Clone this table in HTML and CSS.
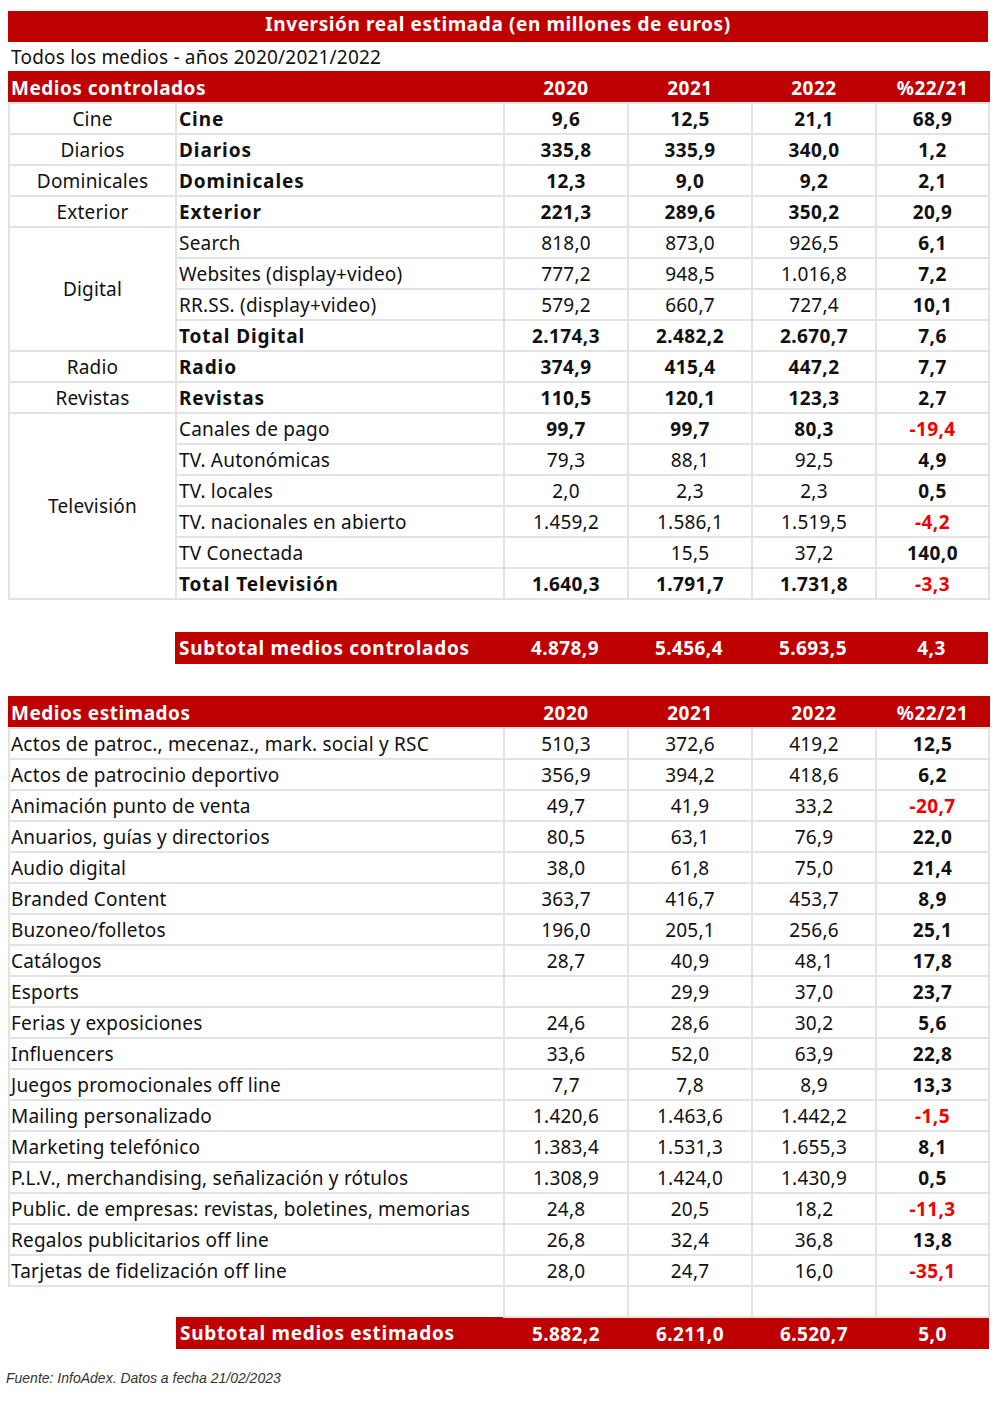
FILE: index.html
```html
<!DOCTYPE html>
<html lang="es">
<head>
<meta charset="utf-8">
<title>Inversión real estimada</title>
<link rel="stylesheet" href="styles.css">
</head>
<body>
<div class="page">
  <div class="title">Inversión real estimada (en millones de euros)</div>
  <div class="subtitle">Todos los medios - años 2020/2021/2022</div>

  <table class="grid">
    <colgroup><col class="c1"><col class="c2"><col class="c3"><col class="c4"><col class="c5"><col class="c6"></colgroup>
    <tr class="head"><th colspan="2" class="lh">Medios controlados</th><th>2020</th><th>2021</th><th>2022</th><th>%22/21</th></tr>
    <tr class="b"><td class="cat">Cine</td><td class="lbl">Cine</td><td>9,6</td><td>12,5</td><td>21,1</td><td>68,9</td></tr>
    <tr class="b"><td class="cat">Diarios</td><td class="lbl">Diarios</td><td>335,8</td><td>335,9</td><td>340,0</td><td>1,2</td></tr>
    <tr class="b"><td class="cat">Dominicales</td><td class="lbl">Dominicales</td><td>12,3</td><td>9,0</td><td>9,2</td><td>2,1</td></tr>
    <tr class="b"><td class="cat">Exterior</td><td class="lbl">Exterior</td><td>221,3</td><td>289,6</td><td>350,2</td><td>20,9</td></tr>
    <tr><td class="cat" rowspan="4">Digital</td><td class="lbl">Search</td><td>818,0</td><td>873,0</td><td>926,5</td><td class="p">6,1</td></tr>
    <tr><td class="lbl">Websites (display+video)</td><td>777,2</td><td>948,5</td><td>1.016,8</td><td class="p">7,2</td></tr>
    <tr><td class="lbl">RR.SS. (display+video)</td><td>579,2</td><td>660,7</td><td>727,4</td><td class="p">10,1</td></tr>
    <tr class="b"><td class="lbl">Total Digital</td><td>2.174,3</td><td>2.482,2</td><td>2.670,7</td><td>7,6</td></tr>
    <tr class="b"><td class="cat">Radio</td><td class="lbl">Radio</td><td>374,9</td><td>415,4</td><td>447,2</td><td>7,7</td></tr>
    <tr class="b"><td class="cat">Revistas</td><td class="lbl">Revistas</td><td>110,5</td><td>120,1</td><td>123,3</td><td>2,7</td></tr>
    <tr class="b"><td class="cat" rowspan="6">Televisión</td><td class="lbl n">Canales de pago</td><td>99,7</td><td>99,7</td><td>80,3</td><td class="neg">-19,4</td></tr>
    <tr><td class="lbl">TV. Autonómicas</td><td>79,3</td><td>88,1</td><td>92,5</td><td class="p">4,9</td></tr>
    <tr><td class="lbl">TV. locales</td><td>2,0</td><td>2,3</td><td>2,3</td><td class="p">0,5</td></tr>
    <tr><td class="lbl">TV. nacionales en abierto</td><td>1.459,2</td><td>1.586,1</td><td>1.519,5</td><td class="p neg">-4,2</td></tr>
    <tr><td class="lbl">TV Conectada</td><td></td><td>15,5</td><td>37,2</td><td class="p">140,0</td></tr>
    <tr class="b"><td class="lbl">Total Televisión</td><td>1.640,3</td><td>1.791,7</td><td>1.731,8</td><td class="neg">-3,3</td></tr>
  </table>

  <table class="grid sub-table">
    <colgroup><col class="c1"><col class="c2"><col class="c3"><col class="c4"><col class="c5"><col class="c6"></colgroup>
    <tr class="subtotal"><td class="blank"></td><td class="lbl">Subtotal medios controlados</td><td>4.878,9</td><td>5.456,4</td><td>5.693,5</td><td>4,3</td></tr>
  </table>

  <table class="grid est">
    <colgroup><col class="c1"><col class="c2"><col class="c3"><col class="c4"><col class="c5"><col class="c6"></colgroup>
    <tr class="head"><th colspan="2" class="lh">Medios estimados</th><th>2020</th><th>2021</th><th>2022</th><th>%22/21</th></tr>
    <tr><td colspan="2" class="lbl wide">Actos de patroc., mecenaz., mark. social y RSC</td><td>510,3</td><td>372,6</td><td>419,2</td><td class="p">12,5</td></tr>
    <tr><td colspan="2" class="lbl wide">Actos de patrocinio deportivo</td><td>356,9</td><td>394,2</td><td>418,6</td><td class="p">6,2</td></tr>
    <tr><td colspan="2" class="lbl wide">Animación punto de venta</td><td>49,7</td><td>41,9</td><td>33,2</td><td class="p neg">-20,7</td></tr>
    <tr><td colspan="2" class="lbl wide">Anuarios, guías y directorios</td><td>80,5</td><td>63,1</td><td>76,9</td><td class="p">22,0</td></tr>
    <tr><td colspan="2" class="lbl wide">Audio digital</td><td>38,0</td><td>61,8</td><td>75,0</td><td class="p">21,4</td></tr>
    <tr><td colspan="2" class="lbl wide">Branded Content</td><td>363,7</td><td>416,7</td><td>453,7</td><td class="p">8,9</td></tr>
    <tr><td colspan="2" class="lbl wide">Buzoneo/folletos</td><td>196,0</td><td>205,1</td><td>256,6</td><td class="p">25,1</td></tr>
    <tr><td colspan="2" class="lbl wide">Catálogos</td><td>28,7</td><td>40,9</td><td>48,1</td><td class="p">17,8</td></tr>
    <tr><td colspan="2" class="lbl wide">Esports</td><td></td><td>29,9</td><td>37,0</td><td class="p">23,7</td></tr>
    <tr><td colspan="2" class="lbl wide">Ferias y exposiciones</td><td>24,6</td><td>28,6</td><td>30,2</td><td class="p">5,6</td></tr>
    <tr><td colspan="2" class="lbl wide">Influencers</td><td>33,6</td><td>52,0</td><td>63,9</td><td class="p">22,8</td></tr>
    <tr><td colspan="2" class="lbl wide">Juegos promocionales off line</td><td>7,7</td><td>7,8</td><td>8,9</td><td class="p">13,3</td></tr>
    <tr><td colspan="2" class="lbl wide">Mailing personalizado</td><td>1.420,6</td><td>1.463,6</td><td>1.442,2</td><td class="p neg">-1,5</td></tr>
    <tr><td colspan="2" class="lbl wide">Marketing telefónico</td><td>1.383,4</td><td>1.531,3</td><td>1.655,3</td><td class="p">8,1</td></tr>
    <tr><td colspan="2" class="lbl wide">P.L.V., merchandising, señalización y rótulos</td><td>1.308,9</td><td>1.424,0</td><td>1.430,9</td><td class="p">0,5</td></tr>
    <tr><td colspan="2" class="lbl wide">Public. de empresas: revistas, boletines, memorias</td><td>24,8</td><td>20,5</td><td>18,2</td><td class="p neg">-11,3</td></tr>
    <tr><td colspan="2" class="lbl wide">Regalos publicitarios off line</td><td>26,8</td><td>32,4</td><td>36,8</td><td class="p">13,8</td></tr>
    <tr><td colspan="2" class="lbl wide">Tarjetas de fidelización off line</td><td>28,0</td><td>24,7</td><td>16,0</td><td class="p neg">-35,1</td></tr>
    <tr class="empty"><td colspan="2" class="blank"></td><td></td><td></td><td></td><td></td></tr>
    <tr class="subtotal"><td class="blank"></td><td class="lbl">Subtotal medios estimados</td><td>5.882,2</td><td>6.211,0</td><td>6.520,7</td><td>5,0</td></tr>
  </table>

  <p class="source">Fuente: InfoAdex. Datos a fecha 21/02/2023</p>
</div>
</body>
</html>
```

FILE: styles.css
```css
html, body {
  margin: 0;
  padding: 0;
  background: #ffffff;
}

body {
  font-family: "Noto Sans", "Open Sans", sans-serif;
  color: #111111;
  font-size: 19px;
  letter-spacing: 0.2px;
}

.page {
  width: 980px;
  padding: 11px 0 0 8px;
}

.title {
  height: 31px;
  line-height: 27px;
  background: #bf0000;
  color: #ffffff;
  font-weight: 700;
  text-align: center;
  letter-spacing: 0.6px;
}

.subtitle {
  height: 29px;
  line-height: 30px;
  padding-left: 3px;
}

.grid {
  width: 980px;
  border-collapse: collapse;
  table-layout: fixed;
}

.c1 { width: 167px; }
.c2 { width: 328px; }
.c3 { width: 124px; }
.c4 { width: 124px; }
.c5 { width: 124px; }
.c6 { width: 113px; }

.grid tr {
  height: 31px;
}

.grid td, .grid th {
  padding: 0;
  text-align: center;
  border: 2px solid #e3e3e3;
  line-height: 28px;
  white-space: nowrap;
}

.grid tr.head th {
  background: #bf0000;
  color: #ffffff;
  font-weight: 700;
  letter-spacing: 0.5px;
  border-color: #bf0000;
  border-bottom-color: #e3e3e3;
}

.grid th.lh {
  text-align: left;
  padding-left: 1px;
}

.grid td.lbl {
  text-align: left;
  padding-left: 2px;
}

.grid td.wide {
  padding-left: 1px;
}

.grid tr.b td {
  font-weight: 700;
  letter-spacing: 0.4px;
}

.grid tr.b td.lbl {
  letter-spacing: 0.9px;
}

.grid tr.b td.cat,
.grid tr.b td.n {
  font-weight: 400;
  letter-spacing: 0.2px;
}

.grid td.cat {
  font-weight: 400;
}

.grid td.p {
  font-weight: 700;
  letter-spacing: 0.4px;
}

.grid td.neg {
  color: #f20000;
}

.sub-table {
  margin-top: 32px;
}

.grid tr.subtotal {
  height: 32px;
}

.grid tr.subtotal td {
  background: #bf0000;
  color: #ffffff;
  font-weight: 700;
  letter-spacing: 0.4px;
  border: none;
}

.grid tr.subtotal td.lbl {
  padding-left: 4px;
  letter-spacing: 0.7px;
}

.grid tr.subtotal td.blank,
.grid tr.empty td.blank {
  background: transparent;
  border: none;
}

.grid tr.empty td.blank {
  border-top: 2px solid #e3e3e3;
}

.est {
  margin-top: 32px;
}

.source {
  margin: 21px 0 0 -2px;
  font-family: "Liberation Sans", Arial, sans-serif;
  font-style: italic;
  font-size: 14px;
  letter-spacing: 0;
  color: #333333;
}
```
